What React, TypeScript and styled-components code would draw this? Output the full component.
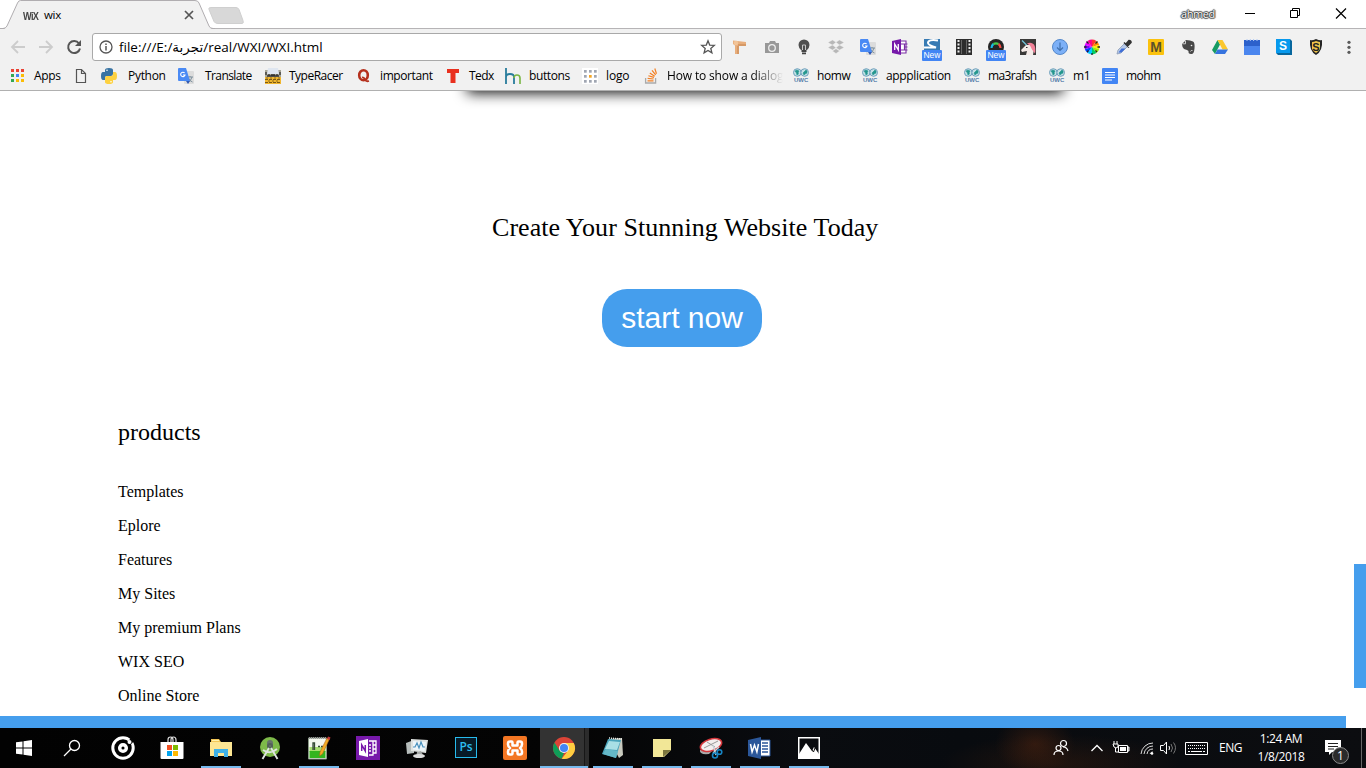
import React from "react";
import styled, { createGlobalStyle } from "styled-components";

const GlobalStyle = createGlobalStyle`
  * { box-sizing: border-box; }
  body { margin: 0; background: #fff; overflow: hidden; }
  svg { display: block; flex: none; overflow: visible; }
`;

const uiFont = `"Open Sans", "Noto Sans", "DejaVu Sans", sans-serif`;

const Screen = styled.div`
  width: 1366px;
  height: 768px;
  display: flex;
  flex-direction: column;
  overflow: hidden;
  font-family: ${uiFont};
  color: #000;
`;

/* ---------- browser window ---------- */

const TitleBar = styled.div`
  height: 29px;
  flex: none;
  display: flex;
  position: relative;
  box-shadow: inset 0 -1px #b6b4b6;
`;
const Tab = styled.div`
  position: relative;
  width: 214px;
  height: 29px;
  display: flex;
  align-items: center;
  padding: 1px 0 0 23px;
  font-size: 11.5px;
  > span { position: relative; }
`;
const TabShape = styled.svg`
  position: absolute;
  inset: 0;
`;
const TabLogo = styled.span`
  width: 21px;
  font: 700 11.5px/14px "Liberation Sans", sans-serif;
  letter-spacing: -0.9px;
  transform: scaleX(0.8);
  transform-origin: left;
  color: #444;
  margin-top: 1px;
`;
const TabTitle = styled.span`
  width: 140px;
  margin-top: -2px;
  letter-spacing: -0.3px;
`;
const WindowControls = styled.div`
  margin-left: auto;
  display: flex;
  align-items: center;
  height: 28px;
`;
const UserName = styled.span`
  font-size: 11px;
  letter-spacing: -0.4px;
  margin-top: -1px;
  color: #fff;
  width: 63px;
  text-shadow: 0 0 1px #222, 1px 0 1px #444, -1px 0 1px #444, 0 1px 1px #444, 0 -1px 1px #444;
`;

const Toolbar = styled.div`
  height: 35px;
  flex: none;
  display: flex;
  align-items: center;
  background: #f1f1f1;
  padding-left: 10px;
`;
const NavGroup = styled.div`
  display: flex;
  gap: 12px;
  width: 82px;
`;
const AddressBar = styled.div`
  width: 630px;
  height: 28px;
  margin-top: 1px;
  border: 1px solid #a9a9a9;
  border-radius: 3px;
  background: #fff;
  display: flex;
  align-items: center;
  padding: 0 5px;
`;
const Address = styled.span`
  flex: 1;
  margin-left: 5px;
  font-size: 13.5px;
  line-height: 18px;
  white-space: nowrap;
`;
const Extensions = styled.div`
  display: flex;
  gap: 16px;
  margin-left: 10px;
  width: 614px;
`;
const Extension = styled.div`
  width: 16px;
  height: 16px;
  position: relative;
`;
const NewBadge = styled.span`
  position: absolute;
  left: -2px;
  top: 11px;
  width: 20px;
  height: 11px;
  border-radius: 1px;
  background: #4285f4;
  color: #fff;
  font: 8.5px/11px "Liberation Sans", sans-serif;
  text-align: center;
`;

const BookmarkBar = styled.div`
  height: 27px;
  flex: none;
  display: flex;
  align-items: center;
  background: #f1f1f1;
  border-bottom: 1px solid #b0b0b0;
  padding: 0 0 2px 9px;
`;
const Bookmark = styled.div<{ $width: number; $gap?: number }>`
  width: ${(p) => p.$width}px;
  flex: none;
  display: flex;
  align-items: center;
  gap: ${(p) => p.$gap ?? 8}px;
`;
const BookmarkLabel = styled.span<{ $spacing?: number; $fade?: boolean }>`
  font-size: 12px;
  line-height: 16px;
  white-space: nowrap;
  letter-spacing: ${(p) => p.$spacing ?? -0.15}px;
  ${(p) => p.$fade && "mask-image: linear-gradient(90deg, #000 85px, transparent 116px);"}
`;

/* ---------- page ---------- */

const Page = styled.main`
  height: 637px;
  flex: none;
  position: relative;
  overflow: hidden;
  background: #fff;
  font-family: "Liberation Serif", serif;
`;
const CardEdge = styled.div`
  width: 596px;
  height: 40px;
  margin: -42px 0 0 467px;
  box-shadow: 0 4px 14px rgba(0, 0, 0, 0.95);
`;
const Headline = styled.h1`
  margin: 0;
  padding: 122px 0 0 492px;
  font-weight: 400;
  font-size: 26px;
  line-height: 34px;
  letter-spacing: 0.06px;
  white-space: nowrap;
`;
const StartButton = styled.button`
  display: block;
  margin: 44px 0 0 602px;
  width: 160px;
  height: 58px;
  padding: 0;
  border: 0;
  border-radius: 25px;
  background: #459eed;
  color: #fff;
  font: 30px "Liberation Sans", sans-serif;
`;
const Products = styled.section`
  padding: 70px 0 0 118px;
`;
const ProductsTitle = styled.h2`
  margin: 0 0 28px;
  font-weight: 400;
  font-size: 24px;
  line-height: 30px;
`;
const ProductList = styled.ul`
  list-style: none;
  margin: 0;
  padding: 0;
`;
const Product = styled.li`
  height: 34px;
  line-height: 34px;
  font-size: 16px;
`;
const VerticalThumb = styled.div`
  position: absolute;
  right: 0;
  top: 473px;
  width: 12px;
  height: 124px;
  background: #459eed;
`;
const HorizontalThumb = styled.div`
  position: absolute;
  left: 0;
  bottom: 0;
  width: 1346px;
  height: 12px;
  background: #459eed;
`;

/* ---------- taskbar ---------- */

const Taskbar = styled.footer`
  height: 40px;
  flex: none;
  display: flex;
  background:
    radial-gradient(ellipse 40px 30px at 1035px 16px, rgba(85, 38, 16, 0.5), transparent),
    radial-gradient(ellipse 120px 30px at 1060px 36px, rgba(60, 30, 14, 0.45), transparent),
    linear-gradient(90deg, #020202 0, #040404 560px, #0a0c10 800px, #080b0f 960px, #0c0d10 1366px);
  color: #fff;
`;
const TaskButton = styled.div<{ $open?: boolean; $active?: boolean; $width?: number }>`
  width: ${(p) => p.$width ?? 49}px;
  flex: none;
  display: flex;
  align-items: center;
  justify-content: center;
  padding-right: ${(p) => (p.$width ? 0 : 2)}px;
  position: relative;
  background: ${(p) => (p.$active ? "linear-gradient(90deg,#333 44px,#171717 44px,#171717 45px,#2c2c2c 45px)" : "none")};
  &::after {
    content: "";
    display: ${(p) => (p.$open ? "block" : "none")};
    position: absolute;
    bottom: 0;
    left: ${(p) => (p.$active ? 0 : 4)}px;
    right: ${(p) => (p.$active ? 1 : 5)}px;
    height: 2px;
    background: #76b9ed;
  }
`;
const TaskGap = styled.div`
  width: 3px;
  flex: none;
`;
const Tray = styled.div`
  margin-left: auto;
  width: 313px;
  flex: none;
  display: flex;
  align-items: center;
  font-size: 12px;
`;
const TrayItem = styled.div<{ $width: number }>`
  width: ${(p) => p.$width}px;
  flex: none;
  white-space: nowrap;
`;
const Language = styled(TrayItem)`
  letter-spacing: -0.5px;
  padding-bottom: 1px;
`;
const Clock = styled(TrayItem)`
  text-align: center;
  line-height: 18px;
  letter-spacing: -0.4px;
`;
const Notifications = styled.div`
  position: relative;
  width: 36px;
  height: 40px;
  padding: 12px 0 0 0;
`;
const NotificationCount = styled.span`
  position: absolute;
  left: 7px;
  top: 19px;
  width: 17px;
  height: 17px;
  border-radius: 50%;
  border: 1px solid #8b8b8b;
  background: #2b2b2b;
  font-size: 12px;
  line-height: 15px;
  text-align: center;
`;
const DesktopEdge = styled.div`
  width: 1px;
  height: 40px;
  background: #666;
`;

const Svg = ({ s = 16, w, h, box, children }: { s?: number; w?: number; h?: number; box?: string; children: React.ReactNode }) => (
  <svg width={w ?? s} height={h ?? s} viewBox={box ?? `0 0 ${w ?? s} ${h ?? s}`} fill="none">
    {children}
  </svg>
);

/* ---------- bookmark icons ---------- */

const AppsIcon = () => {
  const c = ["#ea4335", "#ea4335", "#ea4335", "#34a853", "#4285f4", "#fbbc05", "#34a853", "#fbbc05", "#fbbc05"];
  return (
    <Svg>
      {c.map((f, i) => (
        <rect key={i} x={2 + (i % 3) * 5} y={1 + Math.floor(i / 3) * 5} width="3" height="3" fill={f} />
      ))}
    </Svg>
  );
};
const PageIcon = () => (
  <Svg><path d="M3.500 1.500h5l4 4v9h-9zM8.500 1.500v4h4" stroke="#555" strokeWidth="1.200" /></Svg>
);
const PythonIcon = () => (
  <Svg>
    <path d="M4 4V2Q4 0 8 0t4 2v4q0 2-2 2H6Q4 8 4 10v2H2Q0 12 0 8t2-4h6" fill="#3873a3" />
    <path d="M12 12v2q0 2-4 2t-4-2v-4q0-2 2-2h4q2 0 2-2V4h2q2 0 2 4t-2 4H8" fill="#fdd140" />
    <circle cx="6" cy="2.200" r=".8" fill="#fff" /><circle cx="10" cy="13.800" r=".8" fill="#fff" />
  </Svg>
);
const TranslateIcon = () => (
  <Svg>
    <rect x="6" y="3" width="10" height="13" rx="1" fill="#dcdcdc" />
    <path d="M9 9h6M12 8v1M14 9q-1 4-4 5M10.500 10q1 3 4 4" stroke="#7c8f9c" />
    <path d="M1 0h7l4 13H1q-1 0-1-1V1q0-1 1-1z" fill="#4a8af4" />
    <path d="M8 13h4l-2 3z" fill="#3059b4" />
    <path d="M6.600 5A2.200 2.200 0 1 0 7 7H5" stroke="#fff" strokeWidth="1.100" />
  </Svg>
);
const TypeRacerIcon = () => (
  <Svg>
    <path d="M0 2h16v14H0z" fill="#a8a697" />
    <path d="M3 0h10l1 6H2z" fill="#dfe6f0" />
    <path d="M1 4v3M15 4v3M4 6v2M6 7h4M12 6v2M2 8h12" stroke="#333" strokeWidth="1.300" />
    <path d="M0 9h16v7H0z" fill="#f0b62e" />
    <path d="M0 11.500h16M0 14.500h16" stroke="#7a5a16" strokeDasharray="3 1" />
    <path d="M2 9v2M6 9v2M10 9v2M14 9v2M4 12v2M8 12v2M12 12v2" stroke="#8d6a1c" />
  </Svg>
);
const QuoraIcon = () => (
  <Svg>
    <ellipse cx="7.500" cy="7.200" rx="4.300" ry="5" stroke="#b5301d" strokeWidth="2.600" />
    <path d="M6 9.500q2-.5 3 2t4 1.500" stroke="#b5301d" strokeWidth="1.800" />
  </Svg>
);
const TedIcon = () => <Svg><path d="M2 1h12v4h-3.500v10h-5V5H2z" fill="#e9301e" /></Svg>;
const HmIcon = () => (
  <Svg>
    <path d="M1 0v16M1 9q0-3 4-3t4 3v7" stroke="#287c9c" strokeWidth="1.800" />
    <path d="M9 10q0-3 3-3t3 3v6" stroke="#79b643" strokeWidth="1.600" />
  </Svg>
);
const DotsIcon = () => (
  <Svg>
    <path d="M0 0h16v16H0z" fill="#fff" />
    {[0, 1, 2, 3, 4, 5, 6, 7, 8].map((i) => (
      <rect key={i} x={2 + (i % 3) * 5} y={2 + Math.floor(i / 3) * 5} width="2.700" height="2.700" fill={i === 4 ? "#f5a623" : "#a0a6b2"} />
    ))}
  </Svg>
);
const StackIcon = () => (
  <Svg>
    <path d="M2.600 10v5h10v-5" stroke="#aaa" strokeWidth="1.300" />
    <path d="M4.500 12.800h6M4.600 10.300l6 .7M5.400 7.700l5.600 1.700M6.800 5l4.900 3.200M9 2.300l3.700 4.600M11.800.500l1.700 5.300" stroke="#f48024" strokeWidth="1.200" />
  </Svg>
);
const UwcLabel = styled.span`
  position: absolute;
  left: 1px;
  top: 9px;
  font: 700 6px/7px "Liberation Sans", sans-serif;
  color: #547eaa;
`;
const UwcWrap = styled.span`
  position: relative;
  width: 16px;
  height: 16px;
  flex: none;
`;
const UwcIcon = () => (
  <UwcWrap>
    <Svg>
      <circle cx="4.300" cy="4.500" r="3.800" fill="#c4e2e6" stroke="#6f9fbd" />
      <circle cx="11.700" cy="4.500" r="3.800" fill="#c4e2e6" stroke="#6f9fbd" />
      <path d="M2 3l2-1 2 1-1 2 .5 1L4 7 3.500 5zM10 5l3-3 1 1v2l-2 1-1 1z" fill="#24968e" stroke="#24968e" strokeWidth=".6" />
    </Svg>
    <UwcLabel>UWC</UwcLabel>
  </UwcWrap>
);
const DocIcon = () => (
  <Svg><rect width="16" height="16" rx="1" fill="#4285f4" /><path d="M3 4.500h10M3 7h10M3 9.500h10M3 12h7" stroke="#fff" strokeWidth="1.200" /></Svg>
);

const bookmarks: { icon: React.ReactNode; label?: string; width: number; gap?: number; spacing?: number; fade?: boolean }[] = [
  { icon: <AppsIcon />, label: "Apps", width: 64, gap: 9, spacing: -0.3 },
  { icon: <PageIcon />, width: 28 },
  { icon: <PythonIcon />, label: "Python", width: 77, gap: 11, spacing: -0.3 },
  { icon: <TranslateIcon />, label: "Translate", width: 87, gap: 11, spacing: -0.6 },
  { icon: <TypeRacerIcon />, label: "TypeRacer", width: 91, spacing: -0.5 },
  { icon: <QuoraIcon />, label: "important", width: 89, spacing: -0.4 },
  { icon: <TedIcon />, label: "Tedx", width: 60, spacing: -0.6 },
  { icon: <HmIcon />, label: "buttons", width: 77, spacing: -0.4 },
  { icon: <DotsIcon />, label: "logo", width: 61 },
  { icon: <StackIcon />, label: "How to show a dialog", width: 150, fade: true },
  { icon: <UwcIcon />, label: "homw", width: 69, spacing: -0.4 },
  { icon: <UwcIcon />, label: "appplication", width: 102, spacing: -0.35 },
  { icon: <UwcIcon />, label: "ma3rafsh", width: 85, spacing: -0.6 },
  { icon: <UwcIcon />, label: "m1", width: 53, spacing: -0.3 },
  { icon: <DocIcon />, label: "mohm", width: 70, spacing: -0.6 },
];

/* ---------- toolbar icons ---------- */

const IconLetter = styled.span<{ $color: string; $size?: number; $shift?: number }>`
  position: absolute;
  top: 0;
  left: 0;
  width: ${(p) => 16 - (p.$shift ?? 0)}px;
  text-align: center;
  font: 700 ${(p) => p.$size ?? 13}px/${(p) => 16 - (p.$shift ?? 0)}px "Liberation Sans", sans-serif;
  color: ${(p) => p.$color};
`;

const OneNoteGlyph = () => (
  <Svg>
    <path d="M9 2h5v12H9" fill="#fff" stroke="#7b2fa5" strokeWidth="1.100" />
    <path d="M9 5h3.500v6H9M12.500 5h3M12.500 8h3M12.500 11h3" stroke="#7b2fa5" strokeWidth="1.200" />
    <path d="M0 2l9-2v16l-9-2z" fill="#7719aa" />
    <path d="M2.700 11V5l3.600 6V5" stroke="#fff" strokeWidth="1.300" />
  </Svg>
);

const wheel = ["#f33", "#f80", "#fe0", "#9e0", "#0c6", "#0cf", "#04f", "#80f", "#e0f", "#f08"];

const extensionIcons: React.ReactNode[] = [
  <Svg><path d="M1 1.500l13 1.500v4H7v8H3V6.500L1 5z" fill="#e8ae7c" /><path d="M6 6h8M6 7v8" stroke="#c48450" /><circle cx="4" cy="4" r="2.300" fill="#f2c498" /></Svg>,
  <Svg><path d="M1 4h4l1-2h5l1 2h3v10H1z" fill="#989898" /><circle cx="8" cy="9" r="3.300" fill="#989898" stroke="#eee" strokeWidth="1.300" /></Svg>,
  <Svg><path d="M5 11Q2.500 8.500 2.500 6a5.500 5.500 0 0 1 11 0q0 2.500-2.500 5z" fill="#505050" /><path d="M6.500 11V6h3v5" stroke="#c8c8c8" /><path d="M5.500 12h5M6 14.300h4" stroke="#444" strokeWidth="1.800" /></Svg>,
  <Svg><path d="M4.500 1L8 3.300 4.500 6 0 3.500zM11.500 1L8 3.300 11.500 6 16 3.500zM0 8.500L4.500 6 8 8.700 4.500 11zM16 8.500L11.500 6 8 8.700 11.500 11zM4.500 12L8 9.700l3.500 2.300L8 14.500z" fill="#b7b7b7" stroke="#eee" strokeWidth=".4" /></Svg>,
  <TranslateIcon />,
  <OneNoteGlyph />,
  <><Svg><path d="M0 0h16v12H0z" fill="#387bb3" /><path d="M14 1.500Q4 0 4 4q0 2 8 4.500H0" stroke="#fff" strokeWidth="2" /></Svg><NewBadge>New</NewBadge></>,
  <Svg><path d="M0 0h16v16H0z" fill="#2d2d2d" /><path d="M2.500 1v14M13.500 1v14" stroke="#eee" strokeWidth="2" strokeDasharray="2 1.500" /><path d="M5.500 1v14M10.500 1v14" stroke="#666" /></Svg>,
  <><Svg><circle cx="8" cy="8" r="8" fill="#252525" /><path d="M3.500 9a5 5 0 0 1 2-4" stroke="#19b7e6" strokeWidth="2.200" /><path d="M5.500 5a5 5 0 0 1 5 0" stroke="#44cc4b" strokeWidth="2.200" /><path d="M10.500 5a5 5 0 0 1 2 4" stroke="#f34a43" strokeWidth="2.200" /></Svg><NewBadge>New</NewBadge></>,
  <Svg><path d="M0 0h16v16H0z" fill="#3a3938" /><path d="M1 11l5-5 4 0 4 4-1 6H6l1-4-5 1z" fill="#f5ebe8" /><path d="M2 1.500L6.500 6" stroke="#72c6dc" strokeWidth="1.300" /><path d="M7 4.500q4-2 7 1 2 3 1 9l-3-4-2-4z" fill="#f28198" /><path d="M6 8.500h1.500" stroke="#333" /></Svg>,
  <Svg><circle cx="8" cy="8" r="7.500" fill="#7cb0f7" stroke="#5488cb" /><path d="M8 3.500v8M5 8.500l3 3 3-3" stroke="#3f70ae" strokeWidth="1.200" /></Svg>,
  <Svg>{wheel.map((c, i) => {
    const a = (i * Math.PI) / 5, b = ((i + 1) * Math.PI) / 5;
    return <path key={c} fill={c} d={`M8 8L${8 + 7.5 * Math.sin(a)} ${8 - 7.5 * Math.cos(a)}A7.500 7.500 0 0 1 ${8 + 7.5 * Math.sin(b)} ${8 - 7.5 * Math.cos(b)}z`} />;
  })}<path d="M0 8h2.500M13.500 8H16M8 14v2M2.500 2.500l2 2M13.500 2.500l-2 2M3 13l1.500-1.500M13 13l-1.500-1.500" stroke="#222" strokeWidth="1.300" /></Svg>,
  <Svg><path d="M1 15l1-4 7-7 3 3-7 7z" fill="#b8cae8" stroke="#8c9cb8" strokeWidth=".8" /><path d="M2.500 13.500l3-4h4l-4 4z" fill="#3f6fd8" /><path d="M8 3.500l5 5M10 5l3-3.500q2 0 2 2L11.500 7z" fill="#333" stroke="#333" strokeWidth="1.600" /></Svg>,
  <><Svg><rect width="16" height="16" rx="1" fill="#fbc20e" /></Svg><IconLetter $color="#5c532b" $size={14}>M</IconLetter></>,
  <Svg><path d="M2 5l4-4 4 .5 3 1q2 1 1.500 7T11 15q-3 0-2.500-3L7 11l-3-1q-2-2-2-5z" fill="#484848" /><path d="M2.500 4.800H5.500V2M10.500 12.500q.5-1.500 2-1" stroke="#ddd" strokeWidth=".9" /><circle cx="11.500" cy="6.500" r=".8" fill="#eee" /></Svg>,
  <Svg><path d="M5.500 1L0 11l3 4 5-9.500z" fill="#169b62" /><path d="M5.500 1h5L16 10.500h-5.500z" fill="#fbc72e" /><path d="M5.500 10.500H16L13 15H3z" fill="#3674df" /></Svg>,
  <Svg><path d="M0 5h16v11H0z" fill="#4b86ee" /><path d="M0 1h16v6H0z" fill="#2c61cb" /><path d="M3 0v2M6.300 0v2M9.600 0v2M13 0v2" stroke="#b2caf4" /></Svg>,
  <><Svg><path d="M14 0l2 2v14H2l-2-2z" fill="#07679e" /><path d="M0 0h14v14H0z" fill="#0799ed" /></Svg><IconLetter $color="#fff" $size={12} $shift={2}>S</IconLetter></>,
  <><Svg><path d="M8 0q4 2 6 1 1 11-6 15Q1 12 2 1q2 1 6-1z" fill="#242424" /><path d="M8 2q3 1 4 1v7q-1 2-4 4-3-2-4-4V3q2 0 4-1z" fill="#f0c44b" /></Svg><IconLetter $color="#222" $size={11}>S</IconLetter></>,
];

/* ---------- taskbar icons ---------- */

const StoreIcon = () => (
  <Svg w={24} h={24}><path d="M.5 6h23v16q0 1-1 1h-21q-1 0-1-1z" fill="#fff" /><path d="M8 6V4q0-3 2.500-3T13 4v2M11 6V4q0-3 2.500-3T16 4v2" stroke="#ddd" strokeWidth="1.200" /><path d="M7 9h5v5H7z" fill="#f25022" /><path d="M13 9h5v5h-5z" fill="#7fba00" /><path d="M7 15h5v5H7z" fill="#00a4ef" /><path d="M13 15h5v5h-5z" fill="#ffb900" /></Svg>
);
const ChromeIcon = () => (
  <Svg s={22} box="0 0 48 48">
    <circle cx="24" cy="24" r="24" fill="#db4437" />
    <path d="M3.200 12L14.500 30 24 35l-5 12.500A24 24 0 0 1 3.200 12z" fill="#0f9d58" />
    <path d="M24 13h21.300A24 24 0 0 1 19 47.500L33.500 29z" fill="#ffcd40" />
    <circle cx="24" cy="24" r="11" fill="#f1f1f1" /><circle cx="24" cy="24" r="8.800" fill="#4285f4" />
  </Svg>
);
const PsTile = styled.span`
  width: 22px;
  height: 21px;
  border: 1.500px solid #27bbed;
  background: #071a27;
  color: #2dbff1;
  font: 600 12px/18px "Open Sans", sans-serif;
  text-align: center;
  margin: 0 0 2px 1px;
`;
const OneNoteTile = styled.span`
  width: 24px;
  height: 24px;
  background: #7719aa;
  display: grid;
  place-items: center;
`;

const tasks: { icon: React.ReactNode; open?: boolean; active?: boolean }[] = [
  { icon: <Svg s={24}><circle cx="12" cy="12" r="10.200" stroke="#fff" strokeWidth="3" /><circle cx="12" cy="12" r="3.300" stroke="#fff" strokeWidth="3.500" /><path d="M16 6.500L20 2l3 3-4 4.500z" fill="#050505" /><circle cx="18.500" cy="6" r="2" fill="#fff" /></Svg> },
  { icon: <StoreIcon /> },
  { icon: <Svg w={22} h={20}><path d="M1 1h8l2 3h10v14H1z" fill="#f2c657" /><path d="M0 4h22v14H0z" fill="#fde693" /><path d="M2 2.500h7" stroke="#fff3ae" /><path d="M4 11h14v8h-4v-4H8v4H4z" fill="#3fb1e7" /></Svg>, open: true },
  { icon: <Svg w={22} h={24}><circle cx="11" cy="11" r="10" fill="#7db949" /><path d="M8 7a3 3 0 0 1 6 0v4H8z" fill="#67736c" /><circle cx="11" cy="10" r="2" stroke="#536158" strokeWidth="2" /><path d="M10 12L3.500 23M12 12l6.500 11M4 14q7 5 14-1" stroke="#dfe5e1" strokeWidth="1.900" /></Svg> },
  { icon: <Svg w={24} h={24}><path d="M1.500 2h18v21h-18z" fill="#f4f8ee" stroke="#8a9a88" /><path d="M2.500 11h16v5h-16z" fill="#a8e070" /><path d="M2.500 15h16v7h-16z" fill="#34b51f" /><path d="M2 2h17" stroke="#999" strokeWidth="2" strokeDasharray="1 1" /><path d="M6 14V7h1.500v7M11 10.500h2M14 10.500h2" stroke="#344a33" strokeWidth="1.300" /><path d="M20 2l2.500 1-7 15-3 2 .5-4z" fill="#f2ac25" stroke="#a45d1b" strokeWidth=".5" /><path d="M20 3l1-2.500 2.500 1-1 2.500z" fill="#c53939" /></Svg>, open: true },
  { icon: <OneNoteTile><Svg s={18}><path d="M0 2l9-2v18l-9-2z" fill="#fff" /><path d="M2.700 12V6l3.600 6V6" stroke="#7719aa" strokeWidth="1.500" /><path d="M10 2h4v14h-4M14 2h3v4h-3M14 6h3v4h-3M14 10h3v4h-3M10 6h2M10 9h2M10 12h2" stroke="#fff" strokeWidth="1.300" /></Svg></OneNoteTile> },
  { icon: <Svg w={24} h={22}><path d="M1 6l8-3v13l-7 1z" fill="#b7bebc" /><path d="M6 2l17 1-2 13-15-2z" fill="#dfe2e0" /><path d="M8 4l13 1-1.500 9L8 12.500z" fill="#eef6fa" /><path d="M8 10h2l2-4 2 5 2-6 2 5h2" stroke="#4a91bd" strokeWidth="1.200" /><path d="M12 15l4-1 2 4-7 2z" fill="#a4a8a6" /><ellipse cx="14" cy="19" rx="6" ry="2" fill="#ddd" /></Svg> },
  { icon: <PsTile>Ps</PsTile> },
  { icon: <Svg s={24}><rect width="24" height="24" rx="2" fill="#f37623" /><path d="M9.500 8.500V6.500q0-1-1-1H7q-2 0-2 2v1q0 2 2 3.500-2 1.500-2 3.500v1q0 2 2 2h1.500q1 0 1-1v-3h5v3q0 1 1 1H17q2 0 2-2v-1q0-2-2-3.500 2-1.500 2-3.500v-1q0-2-2-2h-1.500q-1 0-1 1v3h-5z" stroke="#fff" strokeWidth="2.500" strokeLinejoin="round" /></Svg> },
  { icon: <ChromeIcon />, open: true, active: true },
  { icon: <Svg w={24} h={22}><path d="M8 2l13-1 1 17-4 3z" fill="#c8cabe" /><path d="M7 2l13 1-5 18L1 17z" fill="#4aa3ba" /><path d="M8 4l11 1-3 8L4 12z" fill="#a9dfe5" /><path d="M8 1l13 1" stroke="#e9edea" strokeWidth="1.500" strokeDasharray="1 1" /><path d="M2 17l13 4 2-7-12-2z" fill="#65b8c7" /></Svg>, open: true },
  { icon: <Svg s={18}><path d="M0 0h18v11l-7 7H0z" fill="#f2e797" /><path d="M10 18v-7h8z" fill="#7b753d" /></Svg>, open: true },
  { icon: <Svg w={24} h={22}><path d="M1 13q-1 5 9 4l3-3" fill="#aaa" /><ellipse cx="12" cy="8" rx="11" ry="5.800" transform="rotate(-17 12 8)" fill="#f4efef" stroke="#d5373c" strokeWidth="1.500" /><path d="M5 11L19 4M8 5l8 5" stroke="#999" /><path d="M14 8l3 10M20 10l-6 6" stroke="#c7d0d7" strokeWidth="1.400" /><circle cx="16" cy="18.500" r="2.500" stroke="#1784c3" strokeWidth="1.600" /><circle cx="20.500" cy="15" r="2.300" stroke="#1784c3" strokeWidth="1.600" /></Svg>, open: true },
  { icon: <Svg w={23} h={22}><path d="M11 3h11v16H11z" fill="#fff" stroke="#2b579a" /><path d="M14 6h6M14 9h6M14 12h6M14 15h6" stroke="#2b579a" strokeWidth="1.300" /><path d="M0 3l13-3v22L0 19z" fill="#2b579a" /><path d="M2.500 7l1.600 8 2.400-7 2.400 7 1.600-8" stroke="#fff" strokeWidth="1.500" /></Svg>, open: true },
  { icon: <Svg s={22}><path d="M.75.75h20.500v20.500H.75z" stroke="#fff" strokeWidth="1.500" /><path d="M1 17L8 6l6 8 2-4 5 7v4H1z" fill="#fff" /><path d="M12.500 11l3 4 1.500-4" stroke="#111" strokeWidth="1" /></Svg>, open: true },
];

const productLinks = ["Templates", "Eplore", "Features", "My Sites", "My premium Plans", "WIX SEO", "Online Store"];

export default function App() {
  return (
    <Screen>
      <GlobalStyle />
      <TitleBar>
        <Tab>
          <TabShape width="250" height="29" fill="none">
            <path d="M4 29Q6 28 7 26L17.500 3Q18.500 .500 20.500 .500H195Q198 .500 199 3l10 23q1 2 3 3z" fill="#f1f1f1" />
            <path d="M0 28.500h3Q5.500 28.500 7 26L17.500 3Q18.500 .500 20.500 .500H195Q198 .500 199 3l10 23q1 2.500 4 2.500h2" stroke="#b0adb0" />
            <path d="M211 7.500h25q2 0 3 2l4 11q1 3-1 3h-24q-3 0-4-2l-5-12q-1-2 2-2z" fill="#d8d8d8" stroke="#cfcfcf" />
          </TabShape>
          <TabLogo>WiX</TabLogo>
          <TabTitle>wix</TabTitle>
          <span><Svg s={10}><path d="M1 1l8 8M9 1L1 9" stroke="#555" strokeWidth="1.700" /></Svg></span>
        </Tab>
        <WindowControls>
          <UserName>ahmed</UserName>
          <Svg w={122} h={28}>
            <path d="M1 13.500h10" stroke="#000" />
            <path d="M46.500 10.500h7v7h-7zM48.500 10V8.500h7v7H54" stroke="#000" />
            <path d="M92 8.500l10 10M102 8.500l-10 10" stroke="#000" strokeWidth="1.200" />
          </Svg>
        </WindowControls>
      </TitleBar>
      <Toolbar>
        <NavGroup>
          <Svg><path d="M15 8H2M8 2L2 8l6 6" stroke="#ccc" strokeWidth="1.800" /></Svg>
          <Svg><path d="M1 8h13M8 2l6 6-6 6" stroke="#ccc" strokeWidth="1.800" /></Svg>
          <Svg><path d="M13 4.500A6 6 0 1 0 14 9.500" stroke="#555" strokeWidth="2" /><path d="M15 1v6H9z" fill="#555" /></Svg>
        </NavGroup>
        <AddressBar>
          <Svg><circle cx="8" cy="8" r="6" stroke="#555" strokeWidth="1.300" /><path d="M8 7v4.500M8 4.500V6" stroke="#555" strokeWidth="1.500" /></Svg>
          <Address>file:///E:/تجربة/real/WXI/WXI.html</Address>
          <Svg><path d="M8 1.800l1.700 4.300 4.600.3-3.500 3 1.100 4.500L8 11.400l-3.900 2.500 1.100-4.500-3.500-3 4.600-.3z" stroke="#555" strokeWidth="1.300" /></Svg>
        </AddressBar>
        <Extensions>
          {extensionIcons.map((icon, i) => <Extension key={i}>{icon}</Extension>)}
        </Extensions>
        <Svg w={6} h={16}><circle cx="3" cy="3.300" r="1.600" fill="#5a5a5a" /><circle cx="3" cy="8.300" r="1.600" fill="#5a5a5a" /><circle cx="3" cy="13.300" r="1.600" fill="#5a5a5a" /></Svg>
      </Toolbar>
      <BookmarkBar>
        {bookmarks.map((b, i) => (
          <Bookmark key={i} $width={b.width} $gap={b.gap}>
            {b.icon}
            {b.label && <BookmarkLabel $spacing={b.spacing} $fade={b.fade}>{b.label}</BookmarkLabel>}
          </Bookmark>
        ))}
      </BookmarkBar>

      <Page>
        <CardEdge />
        <Headline>Create Your Stunning Website Today</Headline>
        <StartButton>start now</StartButton>
        <Products>
          <ProductsTitle>products</ProductsTitle>
          <ProductList>
            {productLinks.map((p) => <Product key={p}>{p}</Product>)}
          </ProductList>
        </Products>
        <VerticalThumb />
        <HorizontalThumb />
      </Page>

      <Taskbar>
        <TaskButton $width={48}><Svg s={16}><path d="M0 2.300L6.500 1.400v6.100H0zM7.500 1.300L16 0v7.500H7.500zM0 8.500h6.500v6.100L0 13.700zM7.500 8.500H16V16l-8.500-1.300z" fill="#fff" /></Svg></TaskButton>
        <TaskButton $width={48}><Svg s={16}><circle cx="10.500" cy="5.500" r="5" stroke="#fff" strokeWidth="1.300" /><path d="M7 9L0 16" stroke="#fff" strokeWidth="1.300" /></Svg></TaskButton>
        <TaskGap />
        {tasks.map((t, i) => <TaskButton key={i} $open={t.open} $active={t.active}>{t.icon}</TaskButton>)}
        <Tray>
          <TrayItem $width={38}><Svg><circle cx="10.500" cy="3.500" r="3" stroke="#fff" strokeWidth="1.200" /><path d="M10 7q4 0 5 4" stroke="#fff" strokeWidth="1.200" /><circle cx="5.500" cy="8" r="2.500" stroke="#fff" strokeWidth="1.200" /><path d="M1 15q0-4 4.500-4t4.500 4" stroke="#fff" strokeWidth="1.200" /></Svg></TrayItem>
          <TrayItem $width={22}><Svg w={12} h={8}><path d="M.5 7L6 1.500 11.500 7" stroke="#fff" strokeWidth="1.300" /></Svg></TrayItem>
          <TrayItem $width={27}><Svg w={16} h={14}><path d="M5.500 4.500h9v7h-9z" stroke="#fff" /><path d="M7 6h6v4H7z" fill="#fff" /><path d="M15 6h1v4h-1zM0 3h5v3q-2 2-4 0zM1 0v3M4 0v3M2.500 7v4H5" stroke="#fff" /></Svg></TrayItem>
          <TrayItem $width={20}><Svg w={14} h={14}><path d="M1 13A12 12 0 0 1 13 2M4 13a9 9 0 0 1 9-8M7 13a6 6 0 0 1 6-5M10 13a3 3 0 0 1 3-2" stroke="#ddd" /><circle cx="12" cy="12.500" r="1.300" fill="#fff" /></Svg></TrayItem>
          <TrayItem $width={25}><Svg w={17} h={14}><path d="M.5 4.500h3l3-3.500v12l-3-3.500h-3z" stroke="#fff" /><path d="M9 5q1 2 0 4" stroke="#fff" /><path d="M11 3q3 4 0 8M13.500 1.500q4 5 0 11" stroke="#777" /></Svg></TrayItem>
          <TrayItem $width={34}><Svg w={23} h={13}><path d="M.5.500h22v12H.5z" stroke="#fff" /><path d="M3 3.500h17M3 6.500h17" stroke="#fff" strokeDasharray="1 1" /><path d="M3 9.500h2M6 9.500h11M18 9.500h2" stroke="#fff" /></Svg></TrayItem>
          <Language $width={37}>ENG</Language>
          <Clock $width={50}>1:24 AM<br />1/8/2018</Clock>
          <TrayItem $width={19} />
          <Notifications>
            <Svg w={16} h={16}><path d="M0 0h16v12H7l-3 3v-3H0z" fill="#fff" /><path d="M3 3.500h10M3 6.500h10M3 9h6" stroke="#222" /></Svg>
            <NotificationCount>1</NotificationCount>
          </Notifications>
          <DesktopEdge />
        </Tray>
      </Taskbar>
    </Screen>
  );
}
